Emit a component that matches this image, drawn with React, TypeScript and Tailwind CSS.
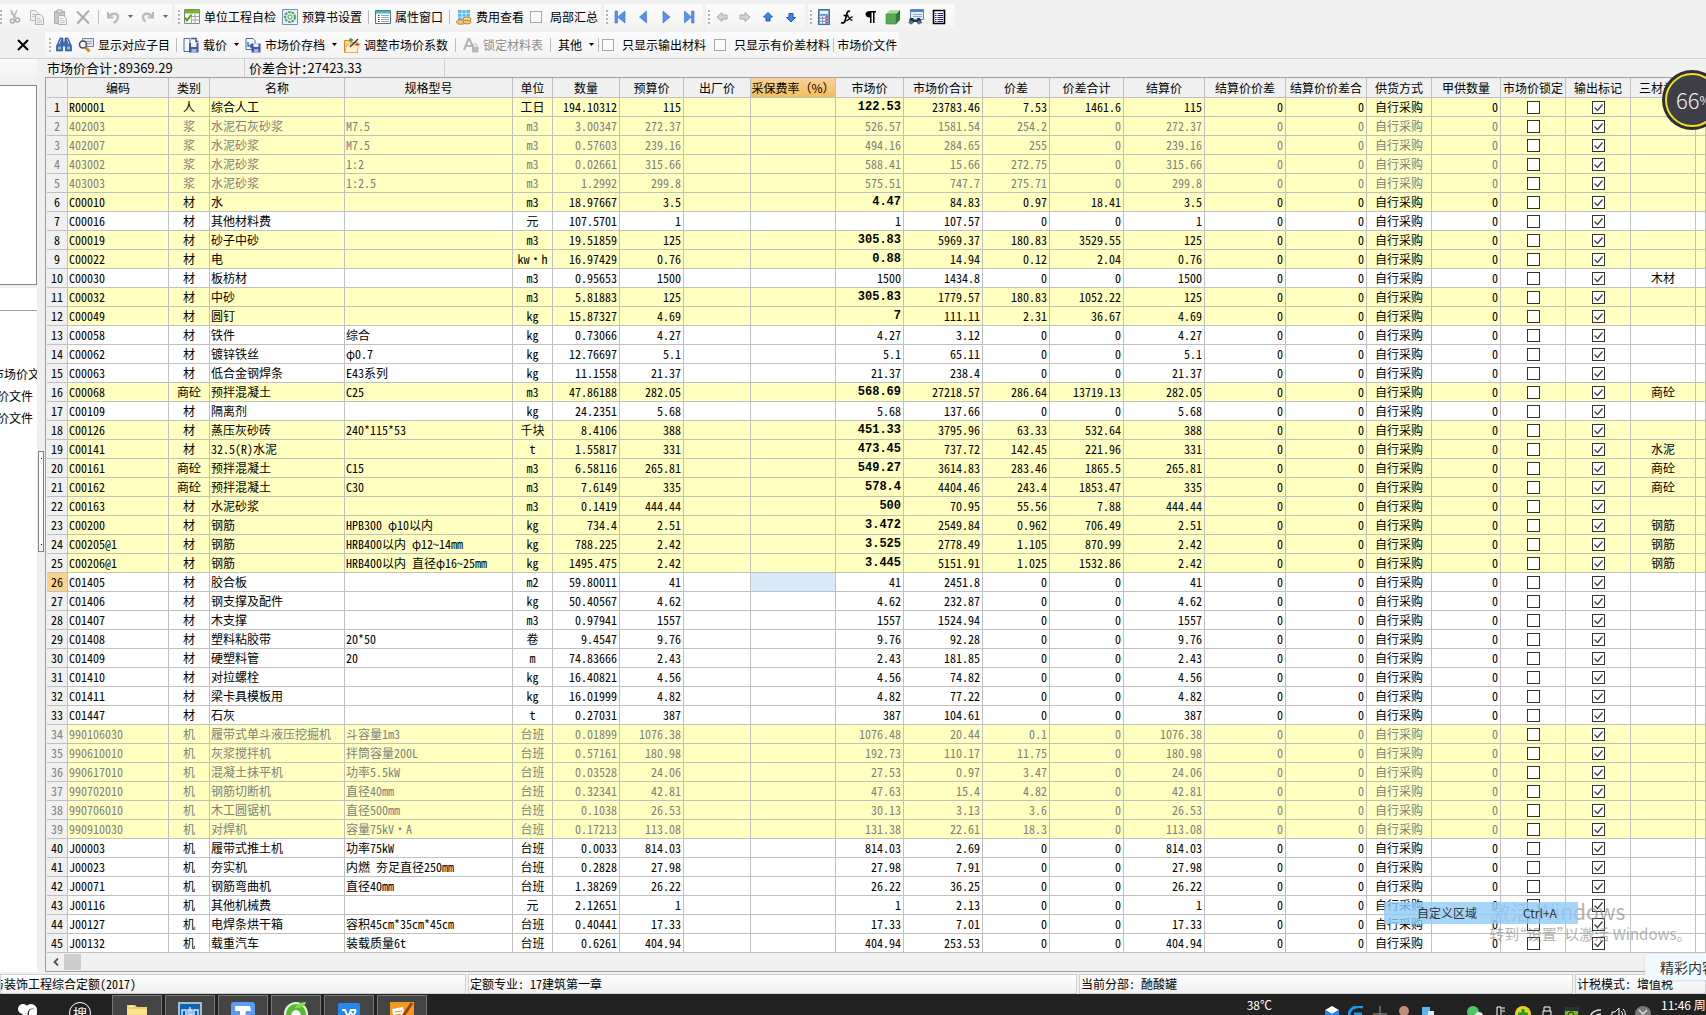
import type { ReactNode } from "react";

type Row = {
  code: string;
  kind: string;
  name: string;
  spec?: string;
  unit: string;
  qty: string;
  budget: string;
  market: string;
  total: string;
  diff?: string;
  diffTotal?: string;
  category?: string;
  tone: "plain" | "hot" | "muted";
};

function row(tone: Row["tone"], line: string): Row {
  const [code, kind, name, spec, unit, qty, budget, market, total, diff, diffTotal, category] = line.split("|");
  return { tone, code, kind, name, spec, unit, qty, budget, market, total, diff, diffTotal, category };
}

// hot = market price was edited (bold), muted = derived from a mix
const rows: Row[] = [
  row("hot", "R00001|人|综合人工||工日|194.10312|115|122.53|23783.46|7.53|1461.6"),
  row("muted", "402003|浆|水泥石灰砂浆|M7.5|m3|3.00347|272.37|526.57|1581.54|254.2|0"),
  row("muted", "402007|浆|水泥砂浆|M7.5|m3|0.57603|239.16|494.16|284.65|255|0"),
  row("muted", "403002|浆|水泥砂浆|1:2|m3|0.02661|315.66|588.41|15.66|272.75|0"),
  row("muted", "403003|浆|水泥砂浆|1:2.5|m3|1.2992|299.8|575.51|747.7|275.71|0"),
  row("hot", "C00010|材|水||m3|18.97667|3.5|4.47|84.83|0.97|18.41"),
  row("plain", "C00016|材|其他材料费||元|107.5701|1|1|107.57|0|0"),
  row("hot", "C00019|材|砂子中砂||m3|19.51859|125|305.83|5969.37|180.83|3529.55"),
  row("hot", "C00022|材|电||kw·h|16.97429|0.76|0.88|14.94|0.12|2.04"),
  row("plain", "C00030|材|板枋材||m3|0.95653|1500|1500|1434.8|0|0|木材"),
  row("hot", "C00032|材|中砂||m3|5.81883|125|305.83|1779.57|180.83|1052.22"),
  row("hot", "C00049|材|圆钉||kg|15.87327|4.69|7|111.11|2.31|36.67"),
  row("plain", "C00058|材|铁件|综合|kg|0.73066|4.27|4.27|3.12|0|0"),
  row("plain", "C00062|材|镀锌铁丝|φ0.7|kg|12.76697|5.1|5.1|65.11|0|0"),
  row("plain", "C00063|材|低合金钢焊条|E43系列|kg|11.1558|21.37|21.37|238.4|0|0"),
  row("hot", "C00068|商砼|预拌混凝土|C25|m3|47.86188|282.05|568.69|27218.57|286.64|13719.13|商砼"),
  row("plain", "C00109|材|隔离剂||kg|24.2351|5.68|5.68|137.66|0|0"),
  row("hot", "C00126|材|蒸压灰砂砖|240*115*53|千块|8.4106|388|451.33|3795.96|63.33|532.64"),
  row("hot", "C00141|材|32.5(R)水泥||t|1.55817|331|473.45|737.72|142.45|221.96|水泥"),
  row("hot", "C00161|商砼|预拌混凝土|C15|m3|6.58116|265.81|549.27|3614.83|283.46|1865.5|商砼"),
  row("hot", "C00162|商砼|预拌混凝土|C30|m3|7.6149|335|578.4|4404.46|243.4|1853.47|商砼"),
  row("hot", "C00163|材|水泥砂浆||m3|0.1419|444.44|500|70.95|55.56|7.88"),
  row("hot", "C00200|材|钢筋|HPB300 φ10以内|kg|734.4|2.51|3.472|2549.84|0.962|706.49|钢筋"),
  row("hot", "C00205@1|材|钢筋|HRB400以内 φ12~14mm|kg|788.225|2.42|3.525|2778.49|1.105|870.99|钢筋"),
  row("hot", "C00206@1|材|钢筋|HRB400以内 直径φ16~25mm|kg|1495.475|2.42|3.445|5151.91|1.025|1532.86|钢筋"),
  row("plain", "C01405|材|胶合板||m2|59.80011|41|41|2451.8|0|0"),
  row("plain", "C01406|材|钢支撑及配件||kg|50.40567|4.62|4.62|232.87|0|0"),
  row("plain", "C01407|材|木支撑||m3|0.97941|1557|1557|1524.94|0|0"),
  row("plain", "C01408|材|塑料粘胶带|20*50|卷|9.4547|9.76|9.76|92.28|0|0"),
  row("plain", "C01409|材|硬塑料管|20|m|74.83666|2.43|2.43|181.85|0|0"),
  row("plain", "C01410|材|对拉螺栓||kg|16.40821|4.56|4.56|74.82|0|0"),
  row("plain", "C01411|材|梁卡具模板用||kg|16.01999|4.82|4.82|77.22|0|0"),
  row("plain", "C01447|材|石灰||t|0.27031|387|387|104.61|0|0"),
  row("muted", "990106030|机|履带式单斗液压挖掘机|斗容量1m3|台班|0.01899|1076.38|1076.48|20.44|0.1|0"),
  row("muted", "990610010|机|灰浆搅拌机|拌筒容量200L|台班|0.57161|180.98|192.73|110.17|11.75|0"),
  row("muted", "990617010|机|混凝土抹平机|功率5.5kW|台班|0.03528|24.06|27.53|0.97|3.47|0"),
  row("muted", "990702010|机|钢筋切断机|直径40mm|台班|0.32341|42.81|47.63|15.4|4.82|0"),
  row("muted", "990706010|机|木工圆锯机|直径500mm|台班|0.1038|26.53|30.13|3.13|3.6|0"),
  row("muted", "990910030|机|对焊机|容量75kV·A|台班|0.17213|113.08|131.38|22.61|18.3|0"),
  row("plain", "J00003|机|履带式推土机|功率75kW|台班|0.0033|814.03|814.03|2.69|0|0"),
  row("plain", "J00023|机|夯实机|内燃 夯足直径250mm|台班|0.2828|27.98|27.98|7.91|0|0"),
  row("plain", "J00071|机|钢筋弯曲机|直径40mm|台班|1.38269|26.22|26.22|36.25|0|0"),
  row("plain", "J00116|机|其他机械费||元|2.12651|1|1|2.13|0|0"),
  row("plain", "J00127|机|电焊条烘干箱|容积45cm*35cm*45cm|台班|0.40441|17.33|17.33|7.01|0|0"),
  row("plain", "J00132|机|载重汽车|装载质量6t|台班|0.6261|404.94|404.94|253.53|0|0"),
];

const columns = [
  { title: "", width: "w-[21px]" },
  { title: "编码", width: "w-[101px]" },
  { title: "类别", width: "w-[41px]" },
  { title: "名称", width: "w-[135px]" },
  { title: "规格型号", width: "w-[168px]" },
  { title: "单位", width: "w-[40px]" },
  { title: "数量", width: "w-[67px]" },
  { title: "预算价", width: "w-[64px]" },
  { title: "出厂价", width: "w-[67px]" },
  { title: "采保费率（%）", width: "w-[85px]" },
  { title: "市场价", width: "w-[68px]" },
  { title: "市场价合计", width: "w-[79px]" },
  { title: "价差", width: "w-[67px]" },
  { title: "价差合计", width: "w-[74px]" },
  { title: "结算价", width: "w-[81px]" },
  { title: "结算价价差", width: "w-[81px]" },
  { title: "结算价价差合", width: "w-[81px]" },
  { title: "供货方式", width: "w-[65px]" },
  { title: "甲供数量", width: "w-[69px]" },
  { title: "市场价锁定", width: "w-[65px]" },
  { title: "输出标记", width: "w-[65px]" },
  { title: "三材类别", width: "w-[65px]" },
  { title: "", width: "" },
];

const SELECTED_ROW = 26;

function Svg({ children, label }: { children: ReactNode; label?: string }) {
  return (
    <svg viewBox="0 0 16 16" className="size-4 shrink-0" role={label ? "img" : undefined} aria-label={label}>
      {children}
    </svg>
  );
}

function Grip() {
  return (
    <svg viewBox="0 0 2 16" className="h-4 w-[2px] shrink-0" fill="#b4b4b4">
      <path d="M0 1h2v2H0zM0 5h2v2H0zM0 9h2v2H0zM0 13h2v2H0z" />
    </svg>
  );
}

function Sep() {
  return <span className="h-[14px] w-px shrink-0 bg-[#bdbdbd]" />;
}

function Caret({ dim }: { dim?: boolean }) {
  return (
    <svg viewBox="0 0 5 3" className="h-[3px] w-[5px] shrink-0" fill={dim ? "#666" : "#000"}>
      <path d="M0 0h5L2.500 3z" />
    </svg>
  );
}

function Strip({ children, className }: { children: ReactNode; className: string }) {
  return (
    <div className={"flex h-[25px] shrink-0 items-center bg-linear-to-b from-[#fcfcfc] to-[#f3f3f3] " + className}>
      {children}
    </div>
  );
}

function Tool({ icon, text, caret, disabled }: { icon?: ReactNode; text?: string; caret?: boolean; disabled?: boolean }) {
  return (
    <button type="button" disabled={disabled} className="flex shrink-0 items-center gap-1 whitespace-nowrap disabled:text-[#8b8b8b]">
      {icon}
      {text && <span>{text}</span>}
      {caret && <span className="pl-[3px]"><Caret /></span>}
    </button>
  );
}

function ToolCheck({ text }: { text: string }) {
  return (
    <label className="flex shrink-0 items-center gap-2 whitespace-nowrap">
      <input type="checkbox" className="size-[12px] appearance-none border border-[#a9a9a9] bg-[#fafafa]" />
      {text}
    </label>
  );
}

const icons = {
  cut: (
    <Svg label="剪切">
      <path d="M5 1l4 8M11 1L7.500 9M5 4l4.500 4" stroke="#b5b5b5" strokeWidth="1.500" fill="none" />
      <circle cx="6.500" cy="12" r="2" fill="none" stroke="#ababab" strokeWidth="1.500" />
      <circle cx="11.500" cy="11" r="2" fill="none" stroke="#ababab" strokeWidth="1.500" />
    </Svg>
  ),
  copy: (
    <Svg label="复制">
      <path d="M1.500 1.500h5l3 3v7h-8z" fill="#f1f1f1" stroke="#b9b9b9" />
      <path d="M6.500 5.500h5l3 3v7h-8z" fill="#f1f1f1" stroke="#b0b0b0" />
      <path d="M8 9.500h3M8 11.500h5M8 13.500h5M3 5.500h3M3 7.500h3" stroke="#c4c4c4" />
    </Svg>
  ),
  paste: (
    <Svg label="粘贴">
      <path d="M2.500 2.500h10v12h-10z" fill="#c9c9c9" stroke="#ababab" />
      <path d="M5 1h5v3H5z" fill="#e4e4e4" stroke="#a5a5a5" />
      <path d="M6.500 6.500h5l3 3v6h-8z" fill="#f4f4f4" stroke="#b0b0b0" />
      <path d="M8 9.500h3M8 11.500h5M8 13.500h5" stroke="#c4c4c4" />
    </Svg>
  ),
  remove: (
    <Svg label="删除">
      <path d="M2 2.500l12 12M14 1.500L2.500 14.500" stroke="#acacac" strokeWidth="2" />
    </Svg>
  ),
  undo: (
    <Svg label="撤销">
      <path d="M3 3v5.500h5.500" fill="none" stroke="#b9b9b9" strokeWidth="2" />
      <path d="M4 8c1.500-4.500 9-4.500 9 0 0 2.500-2 4.500-4.500 6" fill="none" stroke="#bdbdbd" strokeWidth="2.500" />
    </Svg>
  ),
  redo: (
    <Svg label="恢复">
      <path d="M13 3v5.500H7.500" fill="none" stroke="#b9b9b9" strokeWidth="2" />
      <path d="M12 8C10.500 3.500 3 3.500 3 8c0 2.500 1 3.500 2.500 4.500" fill="none" stroke="#bdbdbd" strokeWidth="2.500" />
    </Svg>
  ),
  check: (
    <Svg>
      <path d="M.5.5h15v14H.5z" fill="#fff" stroke="#7d8a78" />
      <path d="M1 1h14v3.500H1z" fill="#6fba2c" />
      <path d="M7 7.500h8M7 11h8M7.500 5v9.500M11 5v9.500" stroke="#a5a5a5" />
      <path d="M1 8.500l2 3L7 6" stroke="#4f9d16" strokeWidth="2" fill="none" />
    </Svg>
  ),
  settings: (
    <Svg>
      <path d="M.5.5h15v15H.5z" fill="#e9f2fb" stroke="#6c8fc4" />
      <circle cx="8" cy="8" r="5" fill="#d8efda" stroke="#4b9d63" strokeWidth="2" strokeDasharray="2.500 1" />
      <circle cx="8" cy="8" r="2" fill="#fff" stroke="#4b9d63" />
    </Svg>
  ),
  window: (
    <Svg>
      <path d="M.5 1.500h15v13H.5z" fill="#fff" stroke="#5a7184" />
      <path d="M1 2h14v2.500H1z" fill="#46b7c9" />
      <path d="M3 6.500h1.500M3 8.500h1.500M3 10.500h1.500M3 12.500h1.500" stroke="#303030" />
      <path d="M6 6.500h8M6 8.500h8M6 10.500h8M6 12.500h8" stroke="#9aa7b3" />
    </Svg>
  ),
  fee: (
    <Svg>
      <path d="M2 1h12v11H2z" fill="#5fb5e8" />
      <path d="M2 4.500h12M2 8h12M6 1v11M10 1v11" stroke="#c6e7f8" />
      <ellipse cx="5" cy="13" rx="4.500" ry="2.200" fill="#f0c772" stroke="#b98633" />
      <ellipse cx="11" cy="10" rx="4" ry="2" fill="#f8dc98" stroke="#b98633" />
      <ellipse cx="11" cy="13" rx="4" ry="2" fill="#f0c772" stroke="#b98633" />
    </Svg>
  ),
  first: (
    <Svg label="首条">
      <path d="M3 2h2.500v12H3zM13 2v12L5.500 8z" fill="#5a90ea" stroke="#3c6fd0" strokeWidth=".6" />
    </Svg>
  ),
  prev: (
    <Svg label="上一条">
      <path d="M11.500 2v12L4.500 8z" fill="#5a90ea" stroke="#3c6fd0" strokeWidth=".6" />
    </Svg>
  ),
  next: (
    <Svg label="下一条">
      <path d="M5 2v12l7-6z" fill="#5a90ea" stroke="#3c6fd0" strokeWidth=".6" />
    </Svg>
  ),
  last: (
    <Svg label="末条">
      <path d="M10.500 2H13v12h-2.500zM3.500 2v12L10.500 8z" fill="#5a90ea" stroke="#3c6fd0" strokeWidth=".6" />
    </Svg>
  ),
  left: (
    <Svg label="左移">
      <path d="M3 8l5-4.500V6h5v4H8v2.500z" fill="#d2d2d2" stroke="#aaa" />
    </Svg>
  ),
  right: (
    <Svg label="右移">
      <path d="M13 8L8 3.500V6H3v4h5v2.500z" fill="#d2d2d2" stroke="#aaa" />
    </Svg>
  ),
  up: (
    <Svg label="上移">
      <path d="M8 3.500L3.500 8H6v4h4V8h2.500z" fill="#3c86f0" stroke="#1c54b4" />
    </Svg>
  ),
  down: (
    <Svg label="下移">
      <path d="M8 13L3.500 8.500H6v-4h4v4h2.500z" fill="#3c86f0" stroke="#1c54b4" />
    </Svg>
  ),
  calc: (
    <Svg label="计算器">
      <path d="M2.500.5h11v15h-11z" fill="#7c9cd6" stroke="#47659e" />
      <path d="M4 2h8v3H4z" fill="#e3f2ff" />
      <path d="M4 7h2v1.500H4zM7 7h2v1.500H7zM4 10h2v1.500H4zM7 10h2v1.500H7zM4 13h2v1.500H4zM7 13h2v1.500H7z" fill="#fff" />
      <path d="M10 7h2v1.500h-2zM10 10h2v1.500h-2zM10 13h2v1.500h-2z" fill="#d5526a" />
    </Svg>
  ),
  fx: (
    <Svg label="函数">
      <path d="M11 2.500C8.500 1 8 4 7.500 6L6 12c-.5 2-2 2.500-4 1.500M4.500 6.500h5" fill="none" stroke="#000" strokeWidth="1.700" />
      <path d="M8.500 8c2-1.500 2 4.500 5 3M13.500 7.500l-6 4.500" fill="none" stroke="#000" strokeWidth="1.300" />
    </Svg>
  ),
  para: (
    <Svg label="段落">
      <path d="M14 2v1.500h-1.500V14H11V3.500H9.500V14H8V8.500C2 8.500 2 2 8 2z" fill="#000" />
    </Svg>
  ),
  cube: (
    <Svg label="模型">
      <path d="M1 5l4-4h10l-4 4z" fill="#a9dc9a" />
      <path d="M11 5l4-4v10l-4 4z" fill="#2c7a36" />
      <path d="M1 5h10v10H1z" fill="#5aaa55" stroke="#3b8441" strokeWidth=".6" />
    </Svg>
  ),
  findSheet: (
    <Svg label="查找">
      <path d="M2.500.5h13v10h-13z" fill="#e3eefb" stroke="#6583b5" />
      <path d="M3 1h12v2H3z" fill="#4f7fd6" />
      <path d="M5 5.500h9M5 7.500h9" stroke="#8fa9d0" />
      <path d="M2 9h3.500v5H.5zM9 9h3l2 5H9zM5 11h4v2H5z" fill="#27313f" />
      <circle cx="3" cy="13.500" r="2" fill="#5d7696" />
      <circle cx="11" cy="13.500" r="2" fill="#5d7696" />
    </Svg>
  ),
  list: (
    <Svg label="列表">
      <path d="M2.500 1.500h11v13h-11z" fill="#fff" stroke="#000" strokeWidth="1.600" />
      <path d="M4 4.500h1.500M4 6.500h1.500M4 8.500h1.500M4 10.500h1.500M4 12.500h1.500M6.500 4.500H12M6.500 6.500H12M6.500 8.500H12M6.500 10.500H12M6.500 12.500H12" stroke="#20207a" />
    </Svg>
  ),
  binoculars: (
    <Svg label="查找">
      <path d="M4 1h3v4h2V1h3l3.500 8v5H9.500V9h-3v5H.5V9z" fill="#3d6cb0" stroke="#21457c" strokeWidth=".6" />
      <path d="M2 9.500h3v3H2zM11 9.500h3v3h-3z" fill="#8fb5e6" />
      <path d="M5 2l-2 5M11 2l2 5" stroke="#a9c8ee" />
    </Svg>
  ),
  sheetSearch: (
    <Svg>
      <path d="M4.500 1.500h11v8h-11z" fill="#dfe9f7" stroke="#6a83ab" />
      <path d="M6 4.500h8M6 6.500h8" stroke="#8fa3c4" />
      <circle cx="5" cy="7.500" r="3.500" fill="#f4f9ff" stroke="#4a4a4a" strokeWidth="1.500" />
      <path d="M7.500 10.500l4 4" stroke="#d08a2e" strokeWidth="3" />
    </Svg>
  ),
  loadPrice: (
    <Svg>
      <path d="M1 1.500h6v13H1z" fill="#f3f6fb" stroke="#54698e" />
      <path d="M8 1.500h5v3h2.500" fill="none" stroke="#3c5a8c" strokeWidth="1.500" />
      <path d="M6 6h9.500v9.500H6z" fill="#4355a8" />
      <path d="M8 6h5.500v4H8z" fill="#eef1fb" />
      <path d="M8.500 12h5v3.500h-5z" fill="#aab4e0" />
    </Svg>
  ),
  archive: (
    <Svg>
      <path d="M1 1.500h7l2 2v9H1z" fill="#f3f6fb" stroke="#54698e" />
      <path d="M3 5v4h4M5.500 7L7.500 9l-2 2" fill="none" stroke="#2f62b8" strokeWidth="1.300" />
      <path d="M6.500 6.500h9v9h-9z" fill="#4355a8" />
      <path d="M8.500 6.500h5v3.500h-5z" fill="#eef1fb" />
      <path d="M9 12h4.500v3.500H9z" fill="#aab4e0" />
    </Svg>
  ),
  adjust: (
    <Svg>
      <path d="M.5 3.500h5l1 2h7v10H.5z" fill="#fbd08a" stroke="#e08a28" />
      <path d="M2.500 8h12l-1.500 7.500H1z" fill="#fff1d2" stroke="#e9a453" strokeWidth=".8" />
      <path d="M6 10l8-8" stroke="#3d3d3d" strokeWidth="1.500" />
      <path d="M5 3h4M7 1v4" stroke="#2d9b3a" strokeWidth="1.300" />
      <path d="M11.500 7.500h4" stroke="#cc2a2a" strokeWidth="1.500" />
    </Svg>
  ),
  lockFont: (
    <Svg>
      <path d="M1 13L5.500 2h1L10 10M2.500 9h6" fill="none" stroke="#b3b3b3" strokeWidth="2" />
      <path d="M9 10h6.500v5.500H9z" fill="#b9b9b9" />
      <path d="M10.500 10V8.500c0-2 3.500-2 3.500 0V10" fill="none" stroke="#b0b0b0" />
    </Svg>
  ),
};

function TopToolbar() {
  return (
    <div className="flex h-[32px] items-center pt-px">
      <Strip className="w-[172px]">
        <Grip />
        <div className="flex items-center gap-[7px] pl-1">
          <Tool icon={icons.cut} />
          <Tool icon={icons.copy} />
          <Tool icon={icons.paste} />
          <Tool icon={icons.remove} />
          <Sep />
        </div>
        <div className="flex items-center gap-[7px] pl-[6px]">
          <Tool icon={icons.undo} />
          <Caret dim />
          <Tool icon={icons.redo} />
          <Caret dim />
        </div>
      </Strip>
      <Strip className="ml-[3px] pl-[3px] pr-[3px]">
        <Grip />
        <div className="flex items-center gap-[6px] pl-1">
          <Tool icon={icons.check} text="单位工程自检" />
          <Tool icon={icons.settings} text="预算书设置" />
          <Sep />
          <Tool icon={icons.window} text="属性窗口" />
          <Sep />
          <Tool icon={icons.fee} text="费用查看" />
          <ToolCheck text="局部汇总" />
        </div>
      </Strip>
      <Strip className="ml-[3px] px-[2px]">
        <Grip />
        <div className="flex items-center gap-[7px] px-1">
          <Tool icon={icons.first} />
          <Tool icon={icons.prev} />
          <Tool icon={icons.next} />
          <Tool icon={icons.last} />
        </div>
      </Strip>
      <Strip className="ml-[3px] px-[2px]">
        <Grip />
        <div className="flex items-center gap-[7px] px-1">
          <Tool icon={icons.left} />
          <Tool icon={icons.right} />
          <Tool icon={icons.up} />
          <Tool icon={icons.down} />
        </div>
      </Strip>
      <Strip className="ml-[3px] pl-[2px] pr-1">
        <Grip />
        <div className="flex items-center gap-[7px] px-1">
          <Tool icon={icons.calc} />
          <Tool icon={icons.fx} />
          <Tool icon={icons.para} />
          <Tool icon={icons.cube} />
          <Tool icon={icons.findSheet} />
          <Tool icon={icons.list} />
        </div>
      </Strip>
    </div>
  );
}

function MaterialToolbar() {
  return (
    <div className="flex h-[27px] items-center border-b border-[#d2d2d2] pb-px">
      <button type="button" aria-label="关闭" className="flex w-[45px] shrink-0 justify-center">
        <svg viewBox="0 0 12 12" className="size-3">
          <path d="M1 1l10 10M11 1L1 11" stroke="#000" strokeWidth="2" />
        </svg>
      </button>
      <Strip className="pl-1 pr-[2px]">
        <Grip />
        <div className="flex items-center gap-[6px] pl-[5px]">
          <Tool icon={icons.binoculars} />
          <Tool icon={icons.sheetSearch} text="显示对应子目" />
          <Sep />
          <Tool icon={icons.loadPrice} text="载价" caret />
          <Tool icon={icons.archive} text="市场价存档" caret />
        </div>
        <div className="flex items-center gap-[7px] pl-[7px]">
          <Tool icon={icons.adjust} text="调整市场价系数" />
          <Sep />
          <Tool icon={icons.lockFont} text="锁定材料表" disabled />
          <Sep />
          <Tool text="其他" caret />
        </div>
        <div className="flex items-center gap-[3px] pl-1">
          <Sep />
          <div className="flex gap-2">
            <ToolCheck text="只显示输出材料" />
            <ToolCheck text="只显示有价差材料" />
          </div>
          <Sep />
          <Tool text="市场价文件" />
        </div>
      </Strip>
    </div>
  );
}

function SidePanel() {
  return (
    <aside className="flex w-[37px] shrink-0 flex-col">
      <div className="h-[26px] bg-linear-to-b from-[#fafafa] to-[#efefef]" />
      <div className="h-[200px] border-y border-r border-[#828790] bg-white" />
      <div className="mt-[3px] h-[23px] border-b border-[#a0a0a0] bg-white" />
      <ul className="flex-1 overflow-hidden whitespace-nowrap bg-white pt-[52px] leading-[22px]">
        <li className="-ml-2">市场价文</li>
        <li className="-ml-[3px]">价文件</li>
        <li className="-ml-[3px]">价文件</li>
      </ul>
    </aside>
  );
}

function Splitter() {
  return (
    <div className="flex w-2 shrink-0 flex-col pt-[392px]">
      <div className="mx-px flex h-[101px] flex-col items-center justify-between border border-[#808080] bg-[#fafafa] py-[6px]">
        <span className="size-px bg-[#000080]" />
        <span className="size-px bg-[#000080]" />
      </div>
    </div>
  );
}

function CellCheck({ label, checked }: { label: string; checked?: boolean }) {
  return (
    <label className="relative mx-auto block size-[13px]">
      <input
        type="checkbox"
        aria-label={label}
        defaultChecked={checked}
        className="peer block size-[13px] appearance-none border border-[#333] bg-white"
      />
      <svg viewBox="0 0 13 13" className="pointer-events-none absolute inset-0 hidden size-[13px] peer-checked:block">
        <path d="M2.500 6.500l3 3 5-6" fill="none" stroke="#404040" strokeWidth="1.300" />
      </svg>
    </label>
  );
}

function Td({ children, className = "" }: { children?: ReactNode; className?: string }) {
  return <td className={"overflow-hidden whitespace-nowrap border-b border-r border-[#c0c0c0] p-0 " + className}>{children}</td>;
}

function MaterialRow({ r, index }: { r: Row; index: number }) {
  const bg = r.tone === "plain" ? "bg-white" : "bg-[#ffffc0]";
  const color = r.tone === "muted" ? "text-[#808080]" : "text-black";
  const selected = index === SELECTED_ROW;
  return (
    <tr className={"h-[19px] " + bg + " " + color}>
      <th
        scope="row"
        className={
          "border-b border-r border-[#c0c0c0] p-0 text-center font-normal " + (selected ? "bg-[#ffd28a]" : "bg-[#f0f0f0]")
        }
      >
        {index}
      </th>
      <Td className="pl-px">{r.code}</Td>
      <Td className="text-center">{r.kind}</Td>
      <Td className="pl-px">{r.name}</Td>
      <Td className="pl-px">{r.spec}</Td>
      <Td className="text-center">{r.unit}</Td>
      <Td className="pr-[2px] text-right">{r.qty}</Td>
      <Td className="pr-[2px] text-right">{r.budget}</Td>
      <Td />
      <Td className={selected ? "bg-[#d8eaf9]" : ""} />
      <Td className={"pr-[2px] text-right " + (r.tone === "hot" ? "font-['Liberation_Mono',monospace] font-bold" : "")}>
        {r.market}
      </Td>
      <Td className="pr-[2px] text-right">{r.total}</Td>
      <Td className="pr-[2px] text-right">{r.diff}</Td>
      <Td className="pr-[2px] text-right">{r.diffTotal}</Td>
      <Td className="pr-[2px] text-right">{r.budget}</Td>
      <Td className="pr-[2px] text-right">0</Td>
      <Td className="pr-[2px] text-right">0</Td>
      <Td className="text-center">自行采购</Td>
      <Td className="pr-[2px] text-right">0</Td>
      <Td><CellCheck label={"市场价锁定 " + r.code} /></Td>
      <Td><CellCheck label={"输出标记 " + r.code} checked /></Td>
      <Td className="text-center">{r.category}</Td>
      <Td />
    </tr>
  );
}

function MaterialTable() {
  return (
    <div className="overflow-hidden border-b border-l border-t border-[#a0a0a0]">
      <div className="pl-px">
        <table className="w-full table-fixed border-separate border-spacing-0 leading-[18px] [font-feature-settings:'hwid']">
          <colgroup>
            {columns.map((c, i) => (
              <col key={i} className={c.width} />
            ))}
          </colgroup>
          <thead className="[font-feature-settings:normal]">
            <tr className="h-5">
              {columns.map((c, i) => (
                <th
                  key={i}
                  scope="col"
                  className={
                    "overflow-hidden whitespace-nowrap border-b border-r border-[#c0c0c0] p-0 text-center font-normal " +
                    (i === 9 ? "bg-linear-to-b from-[#f8d396] to-[#f2bd5c]" : "bg-[#f0f0f0]")
                  }
                >
                  {c.title}
                </th>
              ))}
            </tr>
          </thead>
          <tbody>
            {rows.map((r, i) => (
              <MaterialRow key={r.code} r={r} index={i + 1} />
            ))}
          </tbody>
        </table>
        <div className="flex h-[18px] items-center">
          <button type="button" aria-label="向左滚动" className="flex w-[17px] justify-center">
            <svg viewBox="0 0 6 8" className="h-2 w-[6px]">
              <path d="M5 0.500L1.500 4 5 7.500" fill="none" stroke="#505050" strokeWidth="1.800" />
            </svg>
          </button>
          <span className="h-4 w-[17px] bg-[#cdcdcd]" />
        </div>
      </div>
    </div>
  );
}

function StatusBar() {
  const cell = "overflow-hidden whitespace-nowrap border border-[#d0d0d0] bg-linear-to-b from-white to-[#f0f0f0] leading-[18px]";
  return (
    <footer className="mt-[2px] grid h-5 grid-cols-[466fr_609fr_494fr_131fr] gap-[2px] [font-feature-settings:'hwid']">
      <div className={cell}>
        <p className="-ml-[9px]">与装饰工程综合定额(2017)</p>
      </div>
      <div className={cell + " pl-px"}>定额专业: 17建筑第一章</div>
      <div className={cell + " pl-px"}>当前分部: 酏酸罐</div>
      <div className={cell + " pl-px"}>计税模式: 增值税</div>
    </footer>
  );
}

const taskApps = [
  {
    name: "文件资源管理器",
    art: <><path d="M2 3h8l2 2h10v19H2z" fill="#f3cf67" /><path d="M2 7h20v17H2z" fill="#fbe08d" /><path d="M4 4h4v1H4z" fill="#fff" /><path d="M7 15h10v2H7z" fill="#5aa6d8" /></>,
  },
  {
    name: "计价软件",
    art: <><path d="M0 0h24v24H0z" fill="#a9bccb" /><path d="M2 2h20v22H2z" fill="#0d63b4" /><path d="M4 13V8h4v5M10 13V8h4v5h-4M12 5v10M16 13V8h4v5" fill="none" stroke="#d8ecff" strokeWidth="1.400" /></>,
  },
  {
    name: "文档",
    art: <><rect width="24" height="24" rx="3" fill="#5a9cf4" /><path d="M4 4h15l1 5h-5c-1 3 0 6-1 10H9V9H4z" fill="#fff" /></>,
  },
  {
    name: "浏览器",
    art: <><circle cx="12" cy="12" r="11" fill="#57b936" stroke="#e3f6da" strokeWidth="2" /><path d="M7 13c2-5 4-5 5-5s4 1 5 5z" fill="#fff" /><path d="M11 6c2-4 6-6 11-6-1 4-5 6-11 6z" fill="#7fdc4e" /></>,
  },
  {
    name: "WPS",
    art: <><rect y="1" width="22" height="22" x="1" rx="2" fill="#2388f2" /><path d="M5 8h3l3 7 3-7h5M13 8l3 7 3-7" fill="none" stroke="#fff" strokeWidth="2" /></>,
  },
  {
    name: "造价助手",
    art: <><path d="M0 0h24v24H0z" fill="#f29a1f" /><path d="M2 7l11-2 3 14H4z" fill="#fff" /><path d="M22 1L11 17" stroke="#a3400e" strokeWidth="3" /><path d="M5 10l7-1M5 13l6-1" stroke="#d58b2b" /></>,
  },
];

function TrayIcon({ children }: { children: ReactNode }) {
  return (
    <svg viewBox="0 0 16 16" className="size-4 shrink-0">
      {children}
    </svg>
  );
}

function Taskbar() {
  return (
    <nav className="flex h-[21px] items-start overflow-hidden bg-[#222] text-white">
      <button type="button" aria-label="开始" className="ml-[18px] mt-[10px]">
        <svg viewBox="0 0 20 18" className="h-[18px] w-5">
          <circle cx="5" cy="5" r="5" fill="#fff" />
          <circle cx="13" cy="6" r="6" fill="#fff" />
          <path d="M4 8l5 2 2 8-5-2z" fill="#fff" />
          <path d="M11 12c-2-5 2-8 6-6" fill="none" stroke="#222" strokeWidth="1.500" />
          <circle cx="15" cy="9" r="4" fill="#fff" />
        </svg>
      </button>
      <button type="button" className="ml-[31px] mt-2 size-[22px] shrink-0 rounded-full border border-white text-sm leading-5">
        搜
      </button>
      <div className="flex gap-[3px] pl-[21px] pt-px">
        {taskApps.map((a) => (
          <button key={a.name} type="button" aria-label={a.name} className="flex h-10 w-[50px] justify-center border border-[#777] bg-[#444] pt-[6px]">
            <svg viewBox="0 0 24 24" className="size-6">{a.art}</svg>
          </button>
        ))}
      </div>
      <span className="ml-auto text-xs leading-[22px]">38℃</span>
      <div className="flex gap-2 pl-[52px] pt-3">
        <TrayIcon><path d="M8 0l7 4-7 4-7-4z" fill="#fff" /><path d="M1 4l7 4 7-4v8H1z" fill="#2489ee" /></TrayIcon>
        <TrayIcon><path d="M15 1C6-1 1 4 1 9c0 5 5 7 9 6M6 8h8" fill="none" stroke="#2196e8" strokeWidth="3" /></TrayIcon>
        <TrayIcon><path d="M8 0v16M1 8h14" stroke="#777" strokeWidth="1.500" /></TrayIcon>
        <TrayIcon><circle cx="8" cy="5" r="5" fill="#c58d76" /><path d="M3 10h10v6H3z" fill="#eee" /></TrayIcon>
        <TrayIcon><path d="M2 1h8v14H2z" fill="#5db3f2" /><path d="M8 5h6v10H8z" fill="#d7ecfb" /></TrayIcon>
      </div>
      <div className="flex gap-2 pl-[31px] pt-3">
        <TrayIcon><circle cx="6" cy="6" r="6" fill="#4cc764" /><circle cx="12" cy="10" r="4" fill="#e8e8e8" /></TrayIcon>
        <TrayIcon><path d="M6 10V1h4v9M11 2h3M11 5h3" fill="none" stroke="#fff" /></TrayIcon>
        <TrayIcon><circle cx="8" cy="8" r="8" fill="#e8d41d" /><path d="M8 3v10M3 8h10" stroke="#239a35" strokeWidth="3" /></TrayIcon>
        <TrayIcon><path d="M5 5V1h6v4M4 5h8v9H4z" fill="none" stroke="#fff" /></TrayIcon>
        <TrayIcon><path d="M1 1h15v15H1z" fill="#263438" /><path d="M2 5h13v11H2z" fill="#7ab51d" /><circle cx="8" cy="9" r="3" fill="none" stroke="#26400c" /></TrayIcon>
        <TrayIcon><path d="M2 14C3 7 8 4 14 4M6 15c1-5 4-7 8-7" fill="none" stroke="#ddd" strokeWidth="1.500" /></TrayIcon>
        <TrayIcon><path d="M1 6h3l4-4v12l-4-4H1zM10 5c2 2 2 4 0 6M12 3c3 3 3 7 0 10" fill="none" stroke="#fff" /></TrayIcon>
        <TrayIcon><circle cx="8" cy="8" r="8" fill="#777" /><path d="M4 4l4 4 4-4M8 8v6" fill="none" stroke="#ddd" strokeWidth="1.500" /></TrayIcon>
      </div>
      <span className="w-[55px] shrink-0 overflow-hidden whitespace-nowrap pl-[10px] text-xs leading-[22px]">11:46 周</span>
    </nav>
  );
}

function Overlays() {
  return (
    <>
      <div className="absolute bottom-[70px] right-[22px] whitespace-nowrap text-[#808080]/60">
        <p className="text-[21px] leading-6">激活 Windows</p>
        <p className="text-[15px] leading-[22px] [font-feature-settings:'halt']">转到“设置”以激活 Windows。</p>
      </div>
      <div className="absolute bottom-[91px] right-32 flex h-[22px] w-[194px] items-center bg-[#90caf9]/80 pl-[33px] text-[#333]">
        <span className="w-[106px]">自定义区域</span>
        <span>Ctrl+A</span>
      </div>
      <div className="absolute bottom-[35px] right-0 w-[61px] overflow-hidden whitespace-nowrap rounded-l bg-[#f0fafe] pl-[15px] text-sm leading-[26px] text-[#333] shadow">
        精彩内容
      </div>
      <div className="absolute -right-4 top-[70px] flex size-[60px] items-center justify-center rounded-full bg-[#2e2f36]">
        <div className="flex size-[54px] items-center rounded-full border-2 border-[#f0df1c] bg-[#3d3e46] pl-[9px] text-[#eee]">
          <span className="text-[22px] font-light">66</span>
          <span className="text-xs">%</span>
        </div>
      </div>
    </>
  );
}

export default function App() {
  return (
    <div className="relative flex min-h-screen flex-col overflow-hidden bg-[#f0f0f0] font-['Noto_Sans_CJK_SC',sans-serif] text-xs text-black">
      <TopToolbar />
      <MaterialToolbar />
      <main className="flex flex-1">
        <SidePanel />
        <Splitter />
        <section className="min-w-0 flex-1">
          <div className="flex h-[18px] text-[13px] leading-[18px] [font-feature-settings:'halt']">
            <p className="w-[200px] border-r border-[#d0d0d0] pl-[2px]">市场价合计：89369.29</p>
            <p className="w-[200px] border-r border-[#d0d0d0] pl-1">价差合计：27423.33</p>
          </div>
          <MaterialTable />
        </section>
      </main>
      <StatusBar />
      <Taskbar />
      <Overlays />
    </div>
  );
}
